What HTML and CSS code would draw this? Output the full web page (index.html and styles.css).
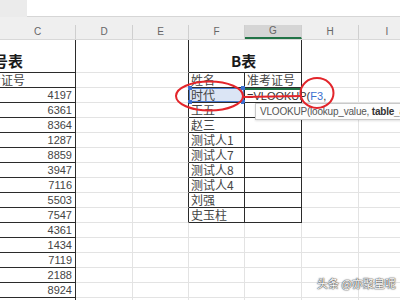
FILE: index.html
```html
<!DOCTYPE html>
<html>
<head>
<meta charset="utf-8">
<link rel="stylesheet" href="styles.css">
</head>
<body>
<div class="app">
  <div class="topbar"><div class="fbox"></div></div>
  <div class="colhead">
    <div class="h">C</div><div class="h">D</div><div class="h">E</div><div class="h">F</div><div class="h sel">G</div><div class="h">H</div><div class="h">I</div>
  </div>
  <div class="sheet">
    <!-- row 1 title -->
    <div class="c title tb tr"><span class="ttl-left">准考证号表</span></div>
    <div class="c title"></div>
    <div class="c title tr"></div>
    <div class="c title merge tb"><span class="ttl">B表</span></div>
    <div class="c title tb tr"></div>
    <div class="c title"></div>
    <div class="c title"></div>
    <!-- row 2 -->
    <div class="c tb tr cjk hdr-left"><span>准考证号</span></div><div class="c"></div><div class="c tr"></div>
    <div class="c tb tr cjk">姓名</div><div class="c tb tr cjk">准考证号</div><div class="c"></div><div class="c"></div>
    <!-- row 3 -->
    <div class="c tb tr num">4197</div><div class="c"></div><div class="c tr"></div>
    <div class="c tb tr cjk ref">时代<i class="hd h1"></i><i class="hd h2"></i><i class="hd h3"></i><i class="hd h4"></i></div>
    <div class="c tb tr formula active">=VLOOKUP(<span class="blue">F3</span>,</div><div class="c"></div><div class="c"></div>
    <!-- row 4 -->
    <div class="c tb tr num">6361</div><div class="c"></div><div class="c tr"></div>
    <div class="c tb tr cjk">王五</div><div class="c tb tr"></div><div class="c"></div><div class="c"></div>
    <!-- row 5 -->
    <div class="c tb tr num">8364</div><div class="c"></div><div class="c tr"></div>
    <div class="c tb tr cjk">赵三</div><div class="c tb tr"></div><div class="c"></div><div class="c"></div>
    <!-- row 6 -->
    <div class="c tb tr num">1287</div><div class="c"></div><div class="c tr"></div>
    <div class="c tb tr cjk">测试人1</div><div class="c tb tr"></div><div class="c"></div><div class="c"></div>
    <!-- row 7 -->
    <div class="c tb tr num">8859</div><div class="c"></div><div class="c tr"></div>
    <div class="c tb tr cjk">测试人7</div><div class="c tb tr"></div><div class="c"></div><div class="c"></div>
    <!-- row 8 -->
    <div class="c tb tr num">3947</div><div class="c"></div><div class="c tr"></div>
    <div class="c tb tr cjk">测试人8</div><div class="c tb tr"></div><div class="c"></div><div class="c"></div>
    <!-- row 9 -->
    <div class="c tb tr num">7116</div><div class="c"></div><div class="c tr"></div>
    <div class="c tb tr cjk">测试人4</div><div class="c tb tr"></div><div class="c"></div><div class="c"></div>
    <!-- row 10 -->
    <div class="c tb tr num">5503</div><div class="c"></div><div class="c tr"></div>
    <div class="c tb tr cjk">刘强</div><div class="c tb tr"></div><div class="c"></div><div class="c"></div>
    <!-- row 11 -->
    <div class="c tb tr num">7547</div><div class="c"></div><div class="c tr"></div>
    <div class="c tb tr cjk">史玉柱</div><div class="c tb tr"></div><div class="c"></div><div class="c"></div>
    <!-- row 12 -->
    <div class="c tb tr num">4361</div><div class="c"></div><div class="c"></div><div class="c"></div><div class="c"></div><div class="c"></div><div class="c"></div>
    <!-- row 13 -->
    <div class="c tb tr num">1434</div><div class="c"></div><div class="c"></div><div class="c"></div><div class="c"></div><div class="c"></div><div class="c"></div>
    <!-- row 14 -->
    <div class="c tb tr num">7119</div><div class="c"></div><div class="c"></div><div class="c"></div><div class="c"></div><div class="c"></div><div class="c"></div>
    <!-- row 15 -->
    <div class="c tb tr num">2188</div><div class="c"></div><div class="c"></div><div class="c"></div><div class="c"></div><div class="c"></div><div class="c"></div>
    <!-- row 16 -->
    <div class="c tb tr num">8924</div><div class="c"></div><div class="c"></div><div class="c"></div><div class="c"></div><div class="c"></div><div class="c"></div>
    <!-- row 17 -->
    <div class="c tr"></div><div class="c"></div><div class="c"></div><div class="c"></div><div class="c"></div><div class="c"></div><div class="c"></div>
  </div>

  <div class="tooltip">VLOOKUP(lookup_value, <b>table_array</b>, col_index_num, [range_lookup])</div>

  <svg class="marks" width="400" height="300" viewBox="0 0 400 300">
    <ellipse cx="209.5" cy="96" rx="33.5" ry="14.5" fill="none" stroke="#e3252b" stroke-width="2"/>
    <path d="M243 97 L302 96" fill="none" stroke="#e3252b" stroke-width="2"/>
    <ellipse cx="317" cy="93" rx="16.5" ry="15" fill="none" stroke="#e3252b" stroke-width="2"/>
  </svg>

  <div class="watermark">头条 @亦聚皇呢</div>
</div>
</body>
</html>
```

FILE: styles.css
```css
html, body {
  margin: 0;
  padding: 0;
  background: #ffffff;
}
body {
  width: 400px;
  height: 300px;
  overflow: hidden;
  font-family: "Liberation Sans", "Noto Sans CJK SC", sans-serif;
  color: #333;
}
.app {
  position: relative;
  width: 400px;
  height: 300px;
  overflow: hidden;
}
.topbar {
  height: 17px;
  background: #ebebeb;
  display: flex;
}
.fbox {
  margin-left: 27px;
  flex: 1;
  background: #fff;
  border-bottom: 1px solid #d6d6d6;
}
.colhead {
  height: 23px;
  background: #efefef;
  display: grid;
  grid-template-columns: 76px 57px 56px 56px 57px 57px 57px;
  align-items: end;
  box-sizing: border-box;
  border-bottom: 1px solid #d8d8d8;
}
.h {
  height: 14px;
  line-height: 13px;
  text-align: center;
  font-size: 10px;
  color: #666;
  border-right: 1px solid #cfcfcf;
  box-sizing: border-box;
}
.h.sel {
  background: #d5d5d5;
  border-bottom: 2px solid #217346;
  line-height: 12px;
}
.sheet {
  display: grid;
  grid-template-columns: 76px 57px 56px 56px 57px 57px 57px;
  grid-template-rows: 33px repeat(16, 15px);
}
.c {
  box-sizing: border-box;
  border-right: 1px solid #e3e3e3;
  border-bottom: 1px solid #e3e3e3;
  font-size: 11px;
  line-height: 14px;
  white-space: nowrap;
  overflow: visible;
  position: relative;
}
.c.tb { border-bottom-color: #2b2b2b; }
.c.tr { border-right-color: #2b2b2b; }
.title {
  display: flex;
  align-items: flex-end;
}
.title.merge {
  border-right: none;
  overflow: visible;
}
.ttl {
  font-family: "Noto Sans CJK SC", sans-serif;
  font-weight: bold;
  font-size: 15px;
  line-height: 20px;
  color: #1a1a1a;
  margin-left: 42px;
  margin-bottom: 1px;
}
.title:first-child {
  justify-content: flex-end;
  overflow: hidden;
}
.ttl-left {
  font-family: "Noto Sans CJK SC", sans-serif;
  font-weight: bold;
  font-size: 15px;
  line-height: 20px;
  color: #1a1a1a;
  margin-right: 52px;
  margin-bottom: 1px;
}
.cjk {
  font-family: "Noto Sans CJK SC", sans-serif;
  font-size: 12px;
  padding-left: 2px;
  color: #444;
}
.hdr-left {
  display: flex;
  justify-content: flex-end;
  overflow: hidden;
  padding-right: 50px;
}
.num {
  text-align: right;
  padding-right: 3px;
  color: #444;
  line-height: 15px;
}
.ref {
  background: #dbe5f5;
  box-shadow: inset 0 0 0 1px #4f7fd3;
}
.hd {
  position: absolute;
  width: 4px;
  height: 4px;
  background: #3b6fd0;
}
.h1 { left: -1px; top: -2px; }
.h2 { right: -1px; top: -2px; }
.h3 { left: -1px; bottom: -2px; }
.h4 { right: -1px; bottom: -2px; }
.formula {
  box-shadow: inset 0 2px 0 #217346;
  padding-left: 2px;
  font-size: 11px;
  line-height: 16px;
  color: #333;
}
.blue { color: #3b6fd0; }
.tooltip {
  position: absolute;
  left: 255px;
  top: 103px;
  width: 200px;
  height: 17px;
  box-sizing: border-box;
  background: #fdfdfd;
  border: 1px solid #c9c9c9;
  box-shadow: 0 1px 2px rgba(0,0,0,0.12);
  font-size: 10px;
  letter-spacing: -0.2px;
  line-height: 15px;
  padding-left: 4px;
  color: #555;
  white-space: nowrap;
  overflow: hidden;
}
.tooltip b { color: #333; }
.marks {
  position: absolute;
  left: 0;
  top: 0;
  pointer-events: none;
}
.watermark {
  position: absolute;
  left: 317px;
  top: 275px;
  font-family: "Noto Sans CJK SC", sans-serif;
  font-size: 11px;
  line-height: 16px;
  color: #ffffff;
  white-space: nowrap;
  text-shadow: 0 0 1px #444, 0 0 1px #444, 0 0 2px #666;
}
```
